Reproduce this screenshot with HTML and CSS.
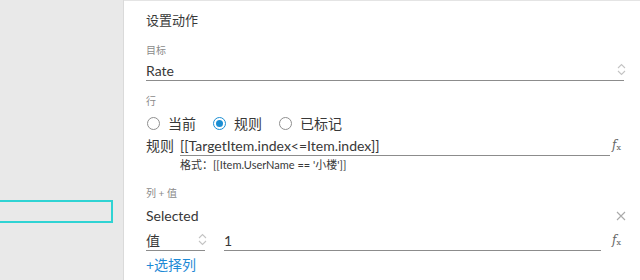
FILE: index.html
```html
<!DOCTYPE html>
<html>
<head>
  <link rel="stylesheet" href="styles.css">
</head>
<body>
  <div class="canvas">
    <div class="selected-widget"></div>
  </div>

  <div class="panel">
    <div class="title">设置动作</div>

    <div class="label">目标</div>
    <div class="field select">
      <span>Rate</span>
      <svg class="updown" width="9" height="13" viewBox="0 0 9 13"><path d="M1 5 L4.5 1.5 L8 5 M1 8 L4.5 11.5 L8 8" fill="none" stroke="#c4c4c4" stroke-width="1.1"/></svg>
    </div>

    <div class="label label-row">行</div>
    <div class="radios">
      <label class="radio"><span class="dot"></span>当前</label>
      <label class="radio checked"><span class="dot"></span>规则</label>
      <label class="radio"><span class="dot"></span>已标记</label>
    </div>

    <div class="rule-row">
      <span class="rule-name">规则</span>
      <div class="field grow">[[TargetItem.index&lt;=Item.index]]</div>
      <span class="fx"><i>f</i><sub>x</sub></span>
    </div>
    <div class="hint">格式：[[Item.UserName == '小楼']]</div>

    <div class="label label-cols">列 + 值</div>
    <div class="col-row">
      <span class="col-name">Selected</span>
      <svg class="close" width="10" height="10" viewBox="0 0 10 10"><path d="M1 1 L9 9 M9 1 L1 9" stroke="#aaa" stroke-width="1.1"/></svg>
    </div>
    <div class="value-row">
      <div class="field select small">
        <span>值</span>
        <svg class="updown" width="9" height="13" viewBox="0 0 9 13"><path d="M1 5 L4.5 1.5 L8 5 M1 8 L4.5 11.5 L8 8" fill="none" stroke="#c4c4c4" stroke-width="1.1"/></svg>
      </div>
      <div class="field grow value">1</div>
      <span class="fx fx-wide"><i>f</i><sub>x</sub></span>
    </div>
    <a class="add-col">+选择列</a>
  </div>
</body>
</html>
```

FILE: styles.css
```css
body, html {
  margin: 0;
  padding: 0;
  height: 100%;
  overflow: hidden;
}

body {
  display: flex;
  font-family: Lato, "Noto Sans CJK SC", sans-serif;
  color: #383838;
  background-color: white;
}

/* left design canvas */
.canvas {
  width: 123px;
  flex: none;
  background-color: #e9e9e9;
  border-right: 1px solid #dadada;
}

.selected-widget {
  margin-top: 200px;
  width: 111px;
  height: 19px;
  border: 2px solid #2fd3d3;
  border-left: none;
}

/* right property panel */
.panel {
  flex: 1;
  border-top: 1px solid #e4e4e4;
  padding: 10px 16px 0 22px;
}

.title {
  font-size: 13px;
  line-height: 18px;
}

.label {
  font-size: 10px;
  line-height: 14px;
  color: #8a8a8a;
  margin-top: 14px;
}

.field {
  position: relative;
  font-size: 14px;
  line-height: 19px;
  border-bottom: 1px solid #8c8c8c;
}

.select {
  margin-top: 4px;
}

.updown {
  position: absolute;
  right: -2px;
  top: 2px;
}

.label-row {
  margin-top: 13px;
}

.radios {
  display: flex;
  align-items: center;
  height: 18px;
  margin-top: 6px;
  font-size: 14px;
}

.radio {
  display: flex;
  align-items: center;
  margin-right: 16px;
}

.dot {
  box-sizing: border-box;
  width: 13px;
  height: 13px;
  border: 1px solid #8f8f8f;
  border-radius: 50%;
  margin: 0 8px 0 1px;
  position: relative;
}

.checked .dot {
  border-color: #1b8ed3;
}

.checked .dot::after {
  content: "";
  position: absolute;
  left: 2px;
  top: 2px;
  width: 7px;
  height: 7px;
  border-radius: 50%;
  background-color: #1b8ed3;
}

.rule-row, .value-row {
  display: flex;
  align-items: flex-end;
  margin-top: 4px;
  font-size: 14px;
}

.rule-name {
  line-height: 18px;
  padding-bottom: 1px;
  margin-right: 6px;
}

.grow {
  flex: 1;
}

.fx {
  width: 12px;
  margin-left: 2px;
  padding-bottom: 2px;
  font-family: "DejaVu Serif", serif;
  font-size: 12px;
  line-height: 12px;
  color: #666;
  white-space: nowrap;
}

.fx sub {
  font-size: 8px;
  font-style: normal;
  vertical-align: -1px;
}

.hint {
  font-size: 11px;
  line-height: 14px;
  margin-top: 2px;
  padding-left: 34px;
}

.label-cols {
  margin-top: 14px;
}

.col-row {
  display: flex;
  align-items: center;
  justify-content: space-between;
  margin-top: 7px;
  font-size: 14px;
  line-height: 18px;
}

.close {
  margin-right: -2px;
}

.value-row {
  margin-top: 6px;
}

.small {
  width: 59px;
  margin-top: 0;
  margin-right: 19px;
}

.fx-wide {
  margin-left: 11px;
}

.add-col {
  display: block;
  margin-top: 5px;
  font-size: 14px;
  line-height: 18px;
  color: #1d8ad6;
  cursor: pointer;
}
```
